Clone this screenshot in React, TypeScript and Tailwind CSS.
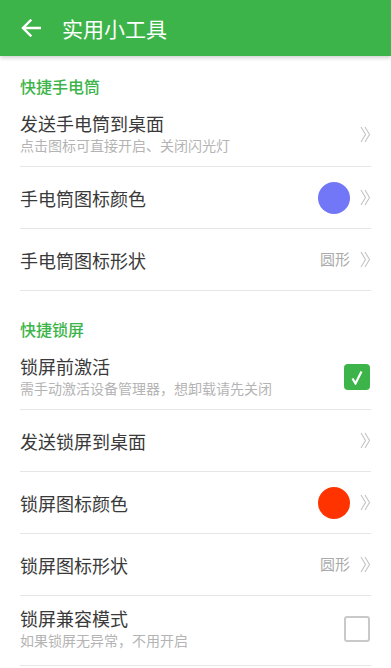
import React from "react";

const FONT = { fontFamily: '"Noto Sans CJK SC", "Noto Sans", sans-serif' };

function Chevron() {
  return (
    <svg width="11" height="17" viewBox="0 0 11 17" className="ml-[10px] shrink-0">
      <polyline points="1,1 5.5,8.5 1,16" fill="none" stroke="#c4c4c4" strokeWidth="1.1" />
      <polyline points="5,1 9.5,8.5 5,16" fill="none" stroke="#c4c4c4" strokeWidth="1.1" />
    </svg>
  );
}

function Row({
  title,
  sub,
  right,
  h = "h-[62px]",
}: {
  title: string;
  sub?: string;
  right?: React.ReactNode;
  h?: string;
}) {
  return (
    <div className={`mx-5 ${h} border-b border-[#e6e6e6] flex items-center justify-between ${sub ? "pb-[3px]" : ""}`}>
      <div className="flex flex-col">
        <div className="text-[18px] leading-[22px] text-[#3a3a3a]">{title}</div>
        {sub && <div className="text-[14px] leading-[22px] text-[#b4b4b4]">{sub}</div>}
      </div>
      <div className="flex items-center">{right}</div>
    </div>
  );
}

function Circle({ color }: { color: string }) {
  return <div className="w-8 h-8 rounded-full" style={{ backgroundColor: color }} />;
}

function Shape() {
  return (
    <>
      <span className="text-[15px] text-[#ababab]">圆形</span>
      <Chevron />
    </>
  );
}

export default function App() {
  return (
    <div className="w-[391px] h-[668px] bg-white overflow-hidden relative" style={FONT}>
      <div className="h-14 bg-[#3db449] flex items-center relative z-10 shadow-[0_2px_4px_rgba(0,0,0,0.18)]">
        <svg width="20" height="18" viewBox="0 0 20 18" className="ml-[21px]">
          <path d="M19 9H2.5M9.5 1.5L2 9l7.5 7.5" fill="none" stroke="#ffffff" strokeWidth="2.4" strokeLinecap="square" />
        </svg>
        <span className="ml-[21px] text-[21px] text-white leading-none">实用小工具</span>
      </div>

      <div className="pt-[21px] pb-[10px] px-5 text-[16px] leading-[18px] font-medium text-[#3db449]">快捷手电筒</div>
      <Row title="发送手电筒到桌面" sub="点击图标可直接开启、关闭闪光灯" right={<Chevron />} />
      <Row
        title="手电筒图标颜色"
        right={
          <>
            <Circle color="#7177f6" />
            <Chevron />
          </>
        }
      />
      <Row title="手电筒图标形状" right={<Shape />} />

      <div className="pt-[29px] pb-[10px] px-5 text-[16px] leading-[18px] font-medium text-[#3db449]">快捷锁屏</div>
      <Row
        title="锁屏前激活"
        sub="需手动激活设备管理器，想卸载请先关闭"
        right={
          <div className="w-[26px] h-[26px] rounded-[4px] bg-[#3db449] flex items-center justify-center mr-[1px]">
            <svg width="12" height="15" viewBox="0 0 12 15">
              <path d="M1.5 8.5L4.5 13.5L10.5 1.5" fill="none" stroke="#ffffff" strokeWidth="2.2" strokeLinejoin="miter" />
            </svg>
          </div>
        }
      />
      <Row title="发送锁屏到桌面" right={<Chevron />} />
      <Row
        title="锁屏图标颜色"
        right={
          <>
            <Circle color="#ff3300" />
            <Chevron />
          </>
        }
      />
      <Row title="锁屏图标形状" right={<Shape />} />
      <Row
        title="锁屏兼容模式"
        sub="如果锁屏无异常，不用开启"
        h="h-[70px]"
        right={<div className="w-[26px] h-[26px] rounded-[3px] border-2 border-[#c9c9c9] mr-[1px]" />}
      />
    </div>
  );
}
